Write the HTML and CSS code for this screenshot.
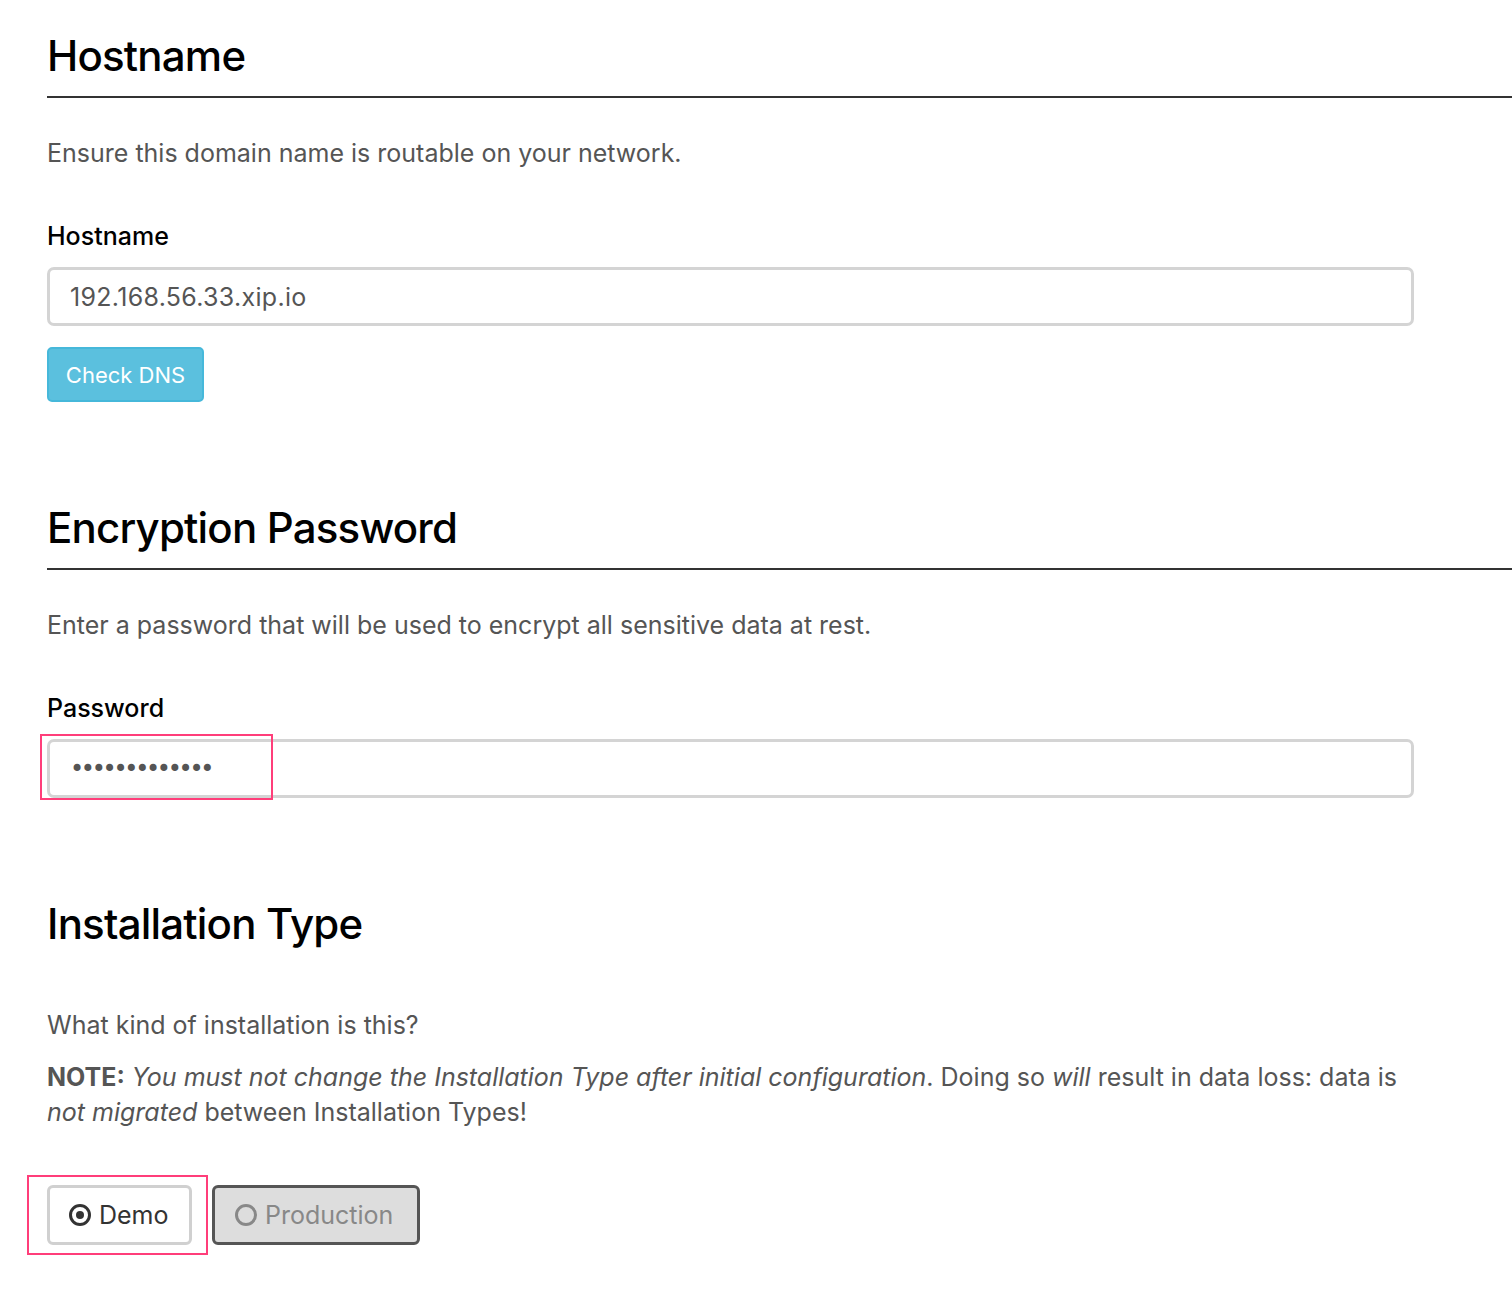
FILE: index.html
```html
<!DOCTYPE html>
<html>
<head>
<meta charset="utf-8">
<link rel="stylesheet" href="styles.css">
</head>
<body>
<main class="page">
  <section class="section">
    <h1 class="title ruled">Hostname</h1>
    <p class="desc">Ensure this domain name is routable on your network.</p>
    <label class="label">Hostname</label>
    <div class="field"><span class="value">192.168.56.33.xip.io</span></div>
    <button class="btn-info">Check DNS</button>
  </section>

  <section class="section">
    <h1 class="title ruled">Encryption Password</h1>
    <p class="desc">Enter a password that will be used to encrypt all sensitive data at rest.</p>
    <label class="label">Password</label>
    <div class="field">
      <span class="value dots">•••••••••••••</span>
      <span class="highlight hl-pass"></span>
    </div>
  </section>

  <section class="section last">
    <h1 class="title">Installation Type</h1>
    <p class="desc q">What kind of installation is this?</p>
    <p class="note"><strong>NOTE:</strong> <em>You must not change the Installation Type after initial configuration</em>. Doing so <em>will</em> result in data loss: data is <em>not migrated</em> between Installation Types!</p>
    <div class="choices">
      <div class="choice active">
        <span class="radio on"></span>Demo
        <span class="highlight hl-demo"></span>
      </div>
      <div class="choice off"><span class="radio"></span>Production</div>
    </div>
  </section>
</main>
</body>
</html>
```

FILE: styles.css
```css
html, body {
  margin: 0;
  padding: 0;
  background: #fff;
}
html { overflow: hidden; }
.page {
  padding: 26px 0 60px 47px;
  font-family: Inter, "Noto Sans", sans-serif;
  color: #555;
}
.section {
  margin-bottom: 96px;
}
.section.last { margin-bottom: 0; }
.title {
  margin: 0;
  font-size: 42px;
  font-weight: 500;
  color: #000;
  letter-spacing: -0.8px;
  line-height: 60px;
}
.title.ruled {
  border-bottom: 2px solid #333;
  padding-bottom: 10px;
}
.desc {
  margin: 0;
  padding-top: 38px;
  font-size: 25px;
  line-height: 34px;
  color: #555;
}
.desc.q { padding-top: 54px; }
.label {
  display: block;
  margin-top: 49px;
  font-size: 25px;
  line-height: 34px;
  font-weight: 500;
  color: #000;
}
.field {
  margin-top: 14px;
  width: 1367px;
  height: 59px;
  box-sizing: border-box;
  border: 3px solid #d4d4d4;
  border-radius: 7px;
  display: flex;
  align-items: center;
  padding-left: 20px;
  position: relative;
}
.value {
  font-size: 25px;
  letter-spacing: 0.3px;
  color: #555;
}
.dots {
  font-size: 24px;
  letter-spacing: -3.3px;
  font-family: "DejaVu Sans", sans-serif;
  color: #555;
  padding-left: 0;
}
.btn-info {
  margin-top: 21px;
  display: block;
  width: 157px;
  height: 55px;
  border: 2px solid #46b8da;
  background: #5bc0de;
  color: #fff;
  border-radius: 5px;
  font-family: Inter, "Noto Sans", sans-serif;
  font-size: 22px;
  padding: 0;
}
.note {
  margin: 18px 0 0;
  font-size: 25px;
  line-height: 35px;
  color: #555;
  max-width: 1370px;
}
.note strong { font-weight: 700; }
.choices {
  margin-top: 55px;
  display: flex;
  gap: 20px;
}
.choice {
  height: 60px;
  box-sizing: border-box;
  border-radius: 6px;
  display: flex;
  align-items: center;
  font-size: 25px;
  position: relative;
}
.choice.active {
  width: 145px;
  border: 3px solid #d0d0d0;
  background: #fff;
  color: #333;
  padding-left: 19px;
}
.choice.off {
  width: 208px;
  border: 3px solid #555;
  background: #ddd;
  color: #888;
  padding-left: 20px;
}
.radio {
  width: 16px;
  height: 16px;
  border: 3px solid currentColor;
  border-radius: 50%;
  margin-right: 8px;
  position: relative;
  flex: none;
}
.radio.on::after {
  content: "";
  position: absolute;
  left: 4px;
  top: 4px;
  width: 8px;
  height: 8px;
  border-radius: 50%;
  background: currentColor;
}
.highlight {
  position: absolute;
  border: 2px solid #ff3e7a;
  pointer-events: none;
}
.hl-pass {
  left: -10px;
  top: -8px;
  width: 229px;
  height: 62px;
}
.hl-demo {
  left: -23px;
  top: -13px;
  width: 177px;
  height: 76px;
}
```
